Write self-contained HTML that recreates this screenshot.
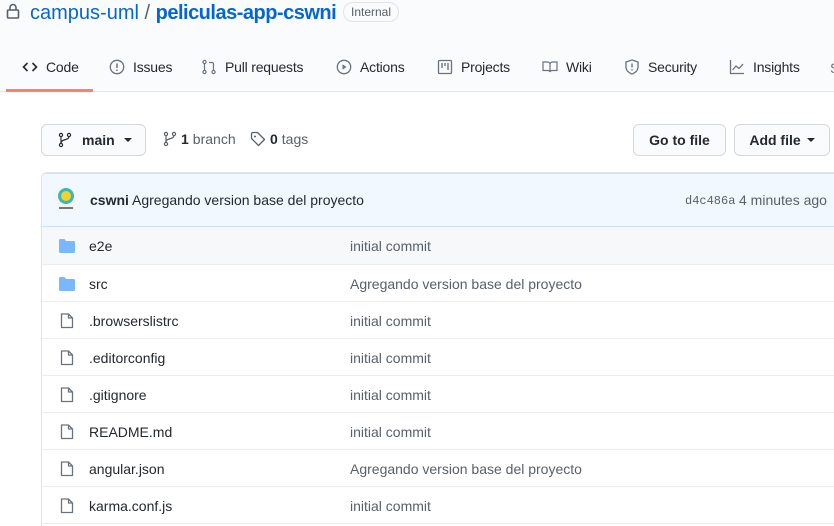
<!DOCTYPE html>
<html><head><meta charset="utf-8"><style>
*{box-sizing:border-box;margin:0;padding:0}
html,body{width:834px;height:526px;overflow:hidden}
body{background:#fff;font-family:"Liberation Sans",Arial,sans-serif;color:#24292e;font-size:14px;position:relative}
.hdr{position:absolute;left:0;top:0;width:834px;height:92px;background:#fafbfc;border-bottom:1px solid #e1e4e8}
.a{position:absolute;white-space:nowrap}
svg{display:block}
.tab{position:absolute;top:59px;font-size:14px;color:#24292e;display:flex;align-items:center;gap:8px;letter-spacing:-0.2px}
.btn{position:absolute;border:1px solid #d5d8da;background:#fafbfc;border-radius:6px;font-weight:bold;font-size:14px;display:flex;align-items:center;justify-content:center}
.box{position:absolute;left:41px;top:172px;width:793px;height:354px;border:1px solid #e1e4e8;border-right:none;border-bottom:none;border-radius:6px 0 0 0;overflow:hidden}
.row{position:absolute;left:0;width:100%;height:37px;border-top:1px solid #eaecef}
.row .ic{position:absolute;left:17px;top:12px}
.row .n{position:absolute;left:47px;top:11px;font-size:14px}
.row .m{position:absolute;left:308px;top:11px;font-size:14px;color:#586069}
</style></head><body>
<div class="hdr"></div>
<svg class="a" style="left:6px;top:3px" width="14" height="16" viewBox="0 0 14 16"><rect x="1.5" y="7" width="11" height="8" rx="1" fill="none" stroke="#586069" stroke-width="1.6"/><path d="M4 7V4.5a3 3 0 016 0V7" fill="none" stroke="#586069" stroke-width="1.6"/></svg>
<div class="a" style="left:30px;top:2px;font-size:20px;color:#0366d6">campus-uml <span style="color:#586069">/</span> <b style="letter-spacing:-0.5px">peliculas-app-cswni</b></div>
<div class="a" style="left:343px;top:2px;height:20px;padding:0 7px;border:1px solid #e1e4e8;border-radius:10px;font-size:12px;line-height:18px;color:#586069">Internal</div>

<div class="tab" style="left:22px"><svg width="16" height="16" viewBox="0 0 16 16"><path d="M5.5 4L1.5 8l4 4M10.5 4l4 4-4 4" fill="none" stroke="#24292e" stroke-width="1.6"/></svg><span>Code</span></div>
<div class="a" style="left:6px;top:89px;width:87px;height:3px;background:#f9826c"></div>
<div class="tab" style="left:109px"><svg width="16" height="16"><circle cx="8" cy="8" r="6.7" fill="none" stroke="#6a737d" stroke-width="1.3"/><path d="M8 4.5v4.5" stroke="#6a737d" stroke-width="1.5"/><circle cx="8" cy="11.3" r=".9" fill="#6a737d"/></svg><span>Issues</span></div>
<div class="tab" style="left:201px"><svg width="16" height="16"><circle cx="3.5" cy="3" r="1.6" fill="none" stroke="#6a737d" stroke-width="1.2"/><circle cx="3.5" cy="13" r="1.6" fill="none" stroke="#6a737d" stroke-width="1.2"/><circle cx="12.5" cy="13" r="1.6" fill="none" stroke="#6a737d" stroke-width="1.2"/><path d="M3.5 4.6v6.8M12.5 11.4V5a1.5 1.5 0 00-1.5-1.5H8" fill="none" stroke="#6a737d" stroke-width="1.2"/></svg>Pull requests</div>
<div class="tab" style="left:336px"><svg width="16" height="16"><circle cx="8" cy="8" r="6.7" fill="none" stroke="#6a737d" stroke-width="1.3"/><path d="M6.5 5.3v5.4L10.5 8z" fill="#6a737d"/></svg>Actions</div>
<div class="tab" style="left:437px"><svg width="16" height="16"><rect x="1.5" y="1.5" width="13" height="13" rx="1" fill="none" stroke="#6a737d" stroke-width="1.3"/><path d="M5 4v5M8 4v3M11 4v7" stroke="#6a737d" stroke-width="1.4"/></svg>Projects</div>
<div class="tab" style="left:542px"><svg width="16" height="16"><path d="M1 3h4.5A2.5 2.5 0 018 5.5V13a2 2 0 00-2-1.5H1zM15 3h-4.5A2.5 2.5 0 008 5.5V13a2 2 0 012-1.5h5z" fill="none" stroke="#6a737d" stroke-width="1.2"/></svg>Wiki</div>
<div class="tab" style="left:624px"><svg width="16" height="16"><path d="M8 1l6 2v5c0 3.5-3 6-6 7-3-1-6-3.5-6-7V3z" fill="none" stroke="#6a737d" stroke-width="1.3"/><path d="M8 4.5v4" stroke="#6a737d" stroke-width="1.4"/><circle cx="8" cy="10.8" r=".8" fill="#6a737d"/></svg>Security</div>
<div class="tab" style="left:729px"><svg width="16" height="16"><path d="M1.5 1v13.5H15" fill="none" stroke="#6a737d" stroke-width="1.3"/><path d="M3.5 11l3.5-4 3 2.5 4-4.5" fill="none" stroke="#6a737d" stroke-width="1.3"/></svg>Insights</div>
<div class="a" style="left:830px;top:60px;font-size:14px;color:#6a737d">S</div>

<div class="btn" style="left:41px;top:124px;width:105px;height:32px;justify-content:flex-start;padding-left:16px"><svg width="14" height="16" viewBox="0 0 14 16"><circle cx="3" cy="3" r="1.6" fill="none" stroke="#24292e" stroke-width="1.2"/><circle cx="3" cy="13" r="1.6" fill="none" stroke="#24292e" stroke-width="1.2"/><circle cx="11" cy="3" r="1.6" fill="none" stroke="#24292e" stroke-width="1.2"/><path d="M3 4.6v6.8M11 4.6c0 4-8 2-8 6.8" fill="none" stroke="#24292e" stroke-width="1.2"/></svg><span style="margin-left:10px;font-weight:600">main</span><span style="margin-left:9px;border:4px solid transparent;border-top:4px solid #24292e;margin-top:4px"></span></div>
<div class="a" style="left:163px;top:131px;display:flex;align-items:center;gap:4px;color:#586069"><svg width="14" height="16" viewBox="0 0 14 16"><circle cx="3" cy="3" r="1.6" fill="none" stroke="#586069" stroke-width="1.2"/><circle cx="3" cy="13" r="1.6" fill="none" stroke="#586069" stroke-width="1.2"/><circle cx="11" cy="3" r="1.6" fill="none" stroke="#586069" stroke-width="1.2"/><path d="M3 4.6v6.8M11 4.6c0 4-8 2-8 6.8" fill="none" stroke="#586069" stroke-width="1.2"/></svg><b style="color:#24292e">1</b> branch</div>
<div class="a" style="left:250px;top:131px;display:flex;align-items:center;gap:4px;color:#586069"><svg width="16" height="16"><path d="M1.5 2.5v5l7 7 6-6-7-7h-5z" fill="none" stroke="#586069" stroke-width="1.3" stroke-linejoin="round"/><circle cx="5" cy="5.5" r="1" fill="#586069"/></svg><b style="color:#24292e">0</b> tags</div>
<div class="btn" style="left:633px;top:124px;width:93px;height:32px;font-weight:600">Go to file</div>
<div class="btn" style="left:734px;top:124px;width:96px;height:32px;font-weight:600">Add file<span style="margin-left:6px;border:4px solid transparent;border-top:4px solid #24292e;margin-top:4px"></span></div>

<div class="box">
 <div style="position:absolute;left:0;top:0;width:100%;height:54px;background:#f1f8ff;border-bottom:1px solid #c8e1ff"></div>
 <div style="position:absolute;left:0;top:0;width:100%;height:1px;background:#c8e1ff"></div>
 <svg class="a" style="left:12px;top:14px" width="24" height="26"><circle cx="12" cy="11" r="11" fill="#f4f4f4"/><circle cx="12" cy="9" r="8" fill="#3cb8b2"/><circle cx="12" cy="9" r="5" fill="#f2d22e"/><rect x="5" y="20" width="14" height="2" fill="#777"/></svg>
 <div class="a" style="left:48px;top:19px"><b style="font-weight:600">cswni</b> Agregando version base del proyecto</div>
 <div class="a" style="left:643px;top:21px;font-family:'Liberation Mono',monospace;font-size:12px;color:#586069">d4c486a</div>
 <div class="a" style="left:697px;top:19px;color:#586069">4 minutes ago</div>
 <div class="row" style="top:54px;background:#f6f8fa;border-top:none"><svg class="ic" width="16" height="14"><path d="M0 1.5A1.5 1.5 0 011.5 0h4l1.5 2h7.5A1.5 1.5 0 0116 3.5v9a1.5 1.5 0 01-1.5 1.5h-13A1.5 1.5 0 010 12.5z" fill="#79b8ff"/></svg><span class="n">e2e</span><span class="m">initial commit</span></div>
 <div class="row" style="top:91px"><svg class="ic" width="16" height="14"><path d="M0 1.5A1.5 1.5 0 011.5 0h4l1.5 2h7.5A1.5 1.5 0 0116 3.5v9a1.5 1.5 0 01-1.5 1.5h-13A1.5 1.5 0 010 12.5z" fill="#79b8ff"/></svg><span class="n">src</span><span class="m">Agregando version base del proyecto</span></div>
 <div class="row" style="top:128px"><svg class="ic" style="left:18px;top:11px" width="14" height="16"><path d="M1.5 1h7l4 4v9.5h-11z M8.5 1v4h4" fill="none" stroke="#6a737d" stroke-width="1.3" stroke-linejoin="round"/></svg><span class="n">.browserslistrc</span><span class="m">initial commit</span></div>
 <div class="row" style="top:165px"><svg class="ic" style="left:18px;top:11px" width="14" height="16"><path d="M1.5 1h7l4 4v9.5h-11z M8.5 1v4h4" fill="none" stroke="#6a737d" stroke-width="1.3" stroke-linejoin="round"/></svg><span class="n">.editorconfig</span><span class="m">initial commit</span></div>
 <div class="row" style="top:202px"><svg class="ic" style="left:18px;top:11px" width="14" height="16"><path d="M1.5 1h7l4 4v9.5h-11z M8.5 1v4h4" fill="none" stroke="#6a737d" stroke-width="1.3" stroke-linejoin="round"/></svg><span class="n">.gitignore</span><span class="m">initial commit</span></div>
 <div class="row" style="top:239px"><svg class="ic" style="left:18px;top:11px" width="14" height="16"><path d="M1.5 1h7l4 4v9.5h-11z M8.5 1v4h4" fill="none" stroke="#6a737d" stroke-width="1.3" stroke-linejoin="round"/></svg><span class="n">README.md</span><span class="m">initial commit</span></div>
 <div class="row" style="top:276px"><svg class="ic" style="left:18px;top:11px" width="14" height="16"><path d="M1.5 1h7l4 4v9.5h-11z M8.5 1v4h4" fill="none" stroke="#6a737d" stroke-width="1.3" stroke-linejoin="round"/></svg><span class="n">angular.json</span><span class="m">Agregando version base del proyecto</span></div>
 <div class="row" style="top:313px"><svg class="ic" style="left:18px;top:11px" width="14" height="16"><path d="M1.5 1h7l4 4v9.5h-11z M8.5 1v4h4" fill="none" stroke="#6a737d" stroke-width="1.3" stroke-linejoin="round"/></svg><span class="n">karma.conf.js</span><span class="m">initial commit</span></div>
 <div class="row" style="top:350px;height:4px"></div>
</div>
</body></html>
